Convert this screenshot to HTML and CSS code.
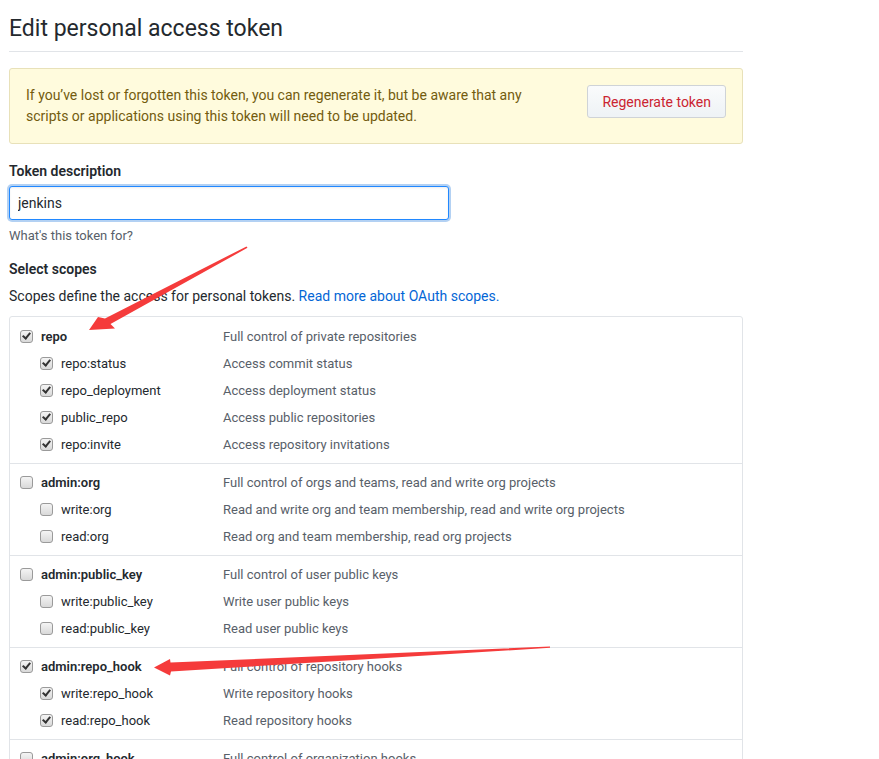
FILE: index.html
```html
<!DOCTYPE html>
<html lang="en">
<head>
<meta charset="utf-8">
<title>Edit personal access token</title>
<link rel="stylesheet" href="styles.css">
</head>
<body>
<div class="page">
  <h1 class="title">Edit personal access token</h1>

  <div class="flash">
    <p class="flash-text">If you’ve lost or forgotten this token, you can regenerate it, but be aware that any<br>scripts or applications using this token will need to be updated.</p>
    <button class="btn btn-danger" type="button">Regenerate token</button>
  </div>

  <div class="form-group">
    <label class="label" for="desc">Token description</label>
    <input class="input" id="desc" type="text" value="jenkins">
    <p class="note">What's this token for?</p>
  </div>

  <h3 class="label scopes-title">Select scopes</h3>
  <p class="scopes-intro">Scopes define the access for personal tokens. <a class="link" href="#">Read more about OAuth scopes.</a></p>

  <div class="scopes">
    <div class="group">
      <div class="row top"><span class="name"><span class="cb on"></span>repo</span><span class="desc">Full control of private repositories</span></div>
      <div class="row sub"><span class="name"><span class="cb on"></span>repo:status</span><span class="desc">Access commit status</span></div>
      <div class="row sub"><span class="name"><span class="cb on"></span>repo_deployment</span><span class="desc">Access deployment status</span></div>
      <div class="row sub"><span class="name"><span class="cb on"></span>public_repo</span><span class="desc">Access public repositories</span></div>
      <div class="row sub"><span class="name"><span class="cb on"></span>repo:invite</span><span class="desc">Access repository invitations</span></div>
    </div>
    <div class="group">
      <div class="row top"><span class="name"><span class="cb"></span>admin:org</span><span class="desc">Full control of orgs and teams, read and write org projects</span></div>
      <div class="row sub"><span class="name"><span class="cb"></span>write:org</span><span class="desc">Read and write org and team membership, read and write org projects</span></div>
      <div class="row sub"><span class="name"><span class="cb"></span>read:org</span><span class="desc">Read org and team membership, read org projects</span></div>
    </div>
    <div class="group">
      <div class="row top"><span class="name"><span class="cb"></span>admin:public_key</span><span class="desc">Full control of user public keys</span></div>
      <div class="row sub"><span class="name"><span class="cb"></span>write:public_key</span><span class="desc">Write user public keys</span></div>
      <div class="row sub"><span class="name"><span class="cb"></span>read:public_key</span><span class="desc">Read user public keys</span></div>
    </div>
    <div class="group">
      <div class="row top"><span class="name"><span class="cb on"></span>admin:repo_hook</span><span class="desc">Full control of repository hooks</span></div>
      <div class="row sub"><span class="name"><span class="cb on"></span>write:repo_hook</span><span class="desc">Write repository hooks</span></div>
      <div class="row sub"><span class="name"><span class="cb on"></span>read:repo_hook</span><span class="desc">Read repository hooks</span></div>
    </div>
    <div class="group">
      <div class="row top"><span class="name"><span class="cb"></span>admin:org_hook</span><span class="desc">Full control of organization hooks</span></div>
    </div>
  </div>

  <svg class="arrows" width="879" height="759" viewBox="0 0 879 759" aria-hidden="true">
    <polygon class="arrow" points="89,330 115,328.5 110.5,324 247.5,247.8 246.5,246.4 105,318.5 98,317"/>
    <polygon class="arrow" points="154,667.5 170,675.5 171,671.5 550,647.8 550,646.6 170.5,662.5 170,659"/>
  </svg>
</div>
</body>
</html>
```

FILE: styles.css
```css
html {
  overflow: hidden;
}

body {
  margin: 0;
  background: #fff;
  color: #24292e;
  font-family: Roboto, "Liberation Sans", sans-serif;
  font-size: 14px;
  line-height: 1.5;
}

.page {
  width: 734px;
  padding: 0 9px;
}

.title {
  margin: 0;
  padding: 12px 0 6px;
  font-size: 23px;
  font-weight: 400;
  line-height: 33px;
  border-bottom: 1px solid #e1e4e8;
  color: #24292e;
}

.flash {
  margin-top: 16px;
  display: flex;
  align-items: flex-start;
  justify-content: space-between;
  padding: 16px;
  background: #fffbdd;
  border: 1px solid #e8e1b9;
  border-radius: 3px;
}

.flash-text {
  margin: 0;
  color: #735c0f;
  line-height: 21px;
}

.btn {
  font-family: inherit;
  font-size: 14px;
  line-height: 20px;
  padding: 6px 14px 5px;
  border: 1px solid #cfd3d7;
  border-radius: 3px;
  background: linear-gradient(#fafbfc, #eff3f6 90%);
  cursor: pointer;
}

.btn-danger {
  color: #cb2431;
}

.form-group {
  margin-top: 17px;
  display: flex;
  flex-direction: column;
}

.label {
  margin: 0;
  font-size: 14px;
  font-weight: 600;
  line-height: 21px;
}

.input {
  margin-top: 4px;
  width: 440px;
  height: 34px;
  box-sizing: border-box;
  padding: 6px 8px;
  font-family: inherit;
  font-size: 14px;
  color: #24292e;
  border: 1px solid #2188ff;
  border-radius: 3px;
  outline: none;
  box-shadow: inset 0 1px 2px rgba(27, 31, 35, 0.075), 0 0 0 2px rgba(3, 102, 214, 0.3);
}

.note {
  margin: 7px 0 0;
  font-size: 13px;
  line-height: 18px;
  color: #586069;
}

.scopes-title {
  margin-top: 14px;
}

.scopes-intro {
  margin: 6px 0 0;
  line-height: 21px;
}

.link {
  color: #0366d6;
  text-decoration: none;
}

.scopes {
  margin-top: 9px;
  border: 1px solid #e1e4e8;
  border-radius: 3px;
}

.group {
  padding: 5px 0;
  border-top: 1px solid #e1e4e8;
}

.group:first-child {
  border-top: 0;
  padding-top: 6px;
}

.row {
  display: flex;
  align-items: center;
  height: 27px;
  font-size: 13px;
  padding-left: 10px;
}

.name {
  display: flex;
  align-items: center;
  width: 203px;
  flex: none;
  color: #24292e;
}

.top .name {
  font-weight: 600;
}

.sub .name {
  box-sizing: border-box;
  padding-left: 20px;
}

.desc {
  color: #586069;
}

.cb {
  position: relative;
  width: 11px;
  height: 11px;
  flex: none;
  margin-right: 8px;
  border: 1px solid #9a9a9a;
  border-radius: 3px;
  background: linear-gradient(#f4f4f4, #d9d9d9);
}

.cb.on::after {
  content: "";
  position: absolute;
  left: 3px;
  top: 0px;
  width: 3px;
  height: 6px;
  border: solid #333;
  border-width: 0 2px 2px 0;
  transform: rotate(40deg);
}

.arrows {
  position: absolute;
  left: 0;
  top: 0;
  pointer-events: none;
}

.arrow {
  fill: #f53b3b;
}
```
